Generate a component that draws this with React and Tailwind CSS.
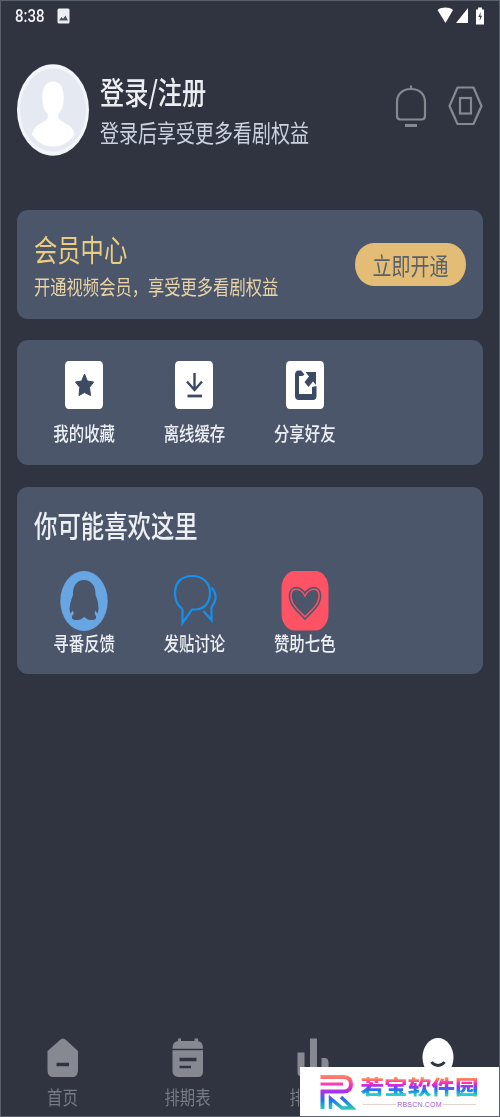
import React from 'react'
import clsx from 'clsx'

// 所有文字纵向拉长
function Tall({ className, children }) {
  return (
    <span className={clsx('block whitespace-nowrap scale-y-[1.27]', className)}>
      {children}
    </span>
  )
}

function StatusBar() {
  return (
    <div className="h-8 flex items-start justify-between pl-3.5 pr-[14px]">
      <div className="flex items-center gap-3 pt-[5px]">
        <span className="block w-[30px] h-5 leading-5 text-[15px] font-medium text-[#f0f1f3] font-['Roboto',sans-serif] scale-y-[1.25]">8:38</span>
        <svg width="13" height="16" viewBox="0 0 13 16">
          <rect x="0.5" y="0.5" width="12" height="15" rx="1.5" fill="#eceef0" />
          <path d="M2 12.5L4.5 9L6 10.8L8.5 7.5L11 12.5Z" fill="#4c5058" />
        </svg>
      </div>
      <svg width="48" height="20" viewBox="0 0 48 20" className="mt-[5px]">
        <path d="M0.5 4C5 0.8 12 0.8 16 4L8.5 17Z" fill="#fff" />
        <path d="M31 2V17H19Z" fill="#fff" />
        <path d="M39 3.5H41V1.5H45V3.5H47V18.5H39Z" fill="#fff" />
        <path d="M43.8 6L41.3 11H43L42.6 15L45 9.8H43.3Z" fill="#3a3f4a" />
      </svg>
    </div>
  )
}

function Avatar() {
  return (
    <svg width="72" height="92" viewBox="0 0 72 92">
      <ellipse cx="36" cy="46" rx="36" ry="45.7" fill="#f2f5f9" />
      <ellipse cx="36" cy="46" rx="33" ry="41.5" fill="#e5e9f1" />
      <path d="M36 17.5C43 17.5 46.8 24 46.8 33C46.8 42 44.5 47 41.5 49.5C41 53 41.2 55 43.5 56.5L52 61.5C55 63.5 57 67 57.5 70.5C53 78 45 82.5 36 82.5C27 82.5 19.5 78 15 70.5C15.5 67 17.5 63.5 20 61.5L28.5 56.5C31 55 31.3 53 30.5 49.5C27.5 47 25.2 42 25.2 33C25.2 24 29 17.5 36 17.5Z" fill="#fff" />
    </svg>
  )
}

function Header() {
  return (
    <div className="flex items-start h-[177px] pt-[31px]">
      <Avatar />
      <div className="ml-[11px] pt-[11px] flex-1">
        <Tall className="text-[24.2px] leading-8 font-medium text-[#eceef1]">登录/注册</Tall>
        <Tall className="text-[19px] leading-8 mt-[9px] text-[#cbd1df]">登录后享受更多看剧权益</Tall>
      </div>
      <svg width="34" height="44" viewBox="0 0 34 44" className="mt-[21px] mr-5" fill="none" stroke="#858990" strokeWidth="2.2">
        <path d="M17 0.5V4M17 4C8 4 3 9.5 3 17V31Q3 34.5 6.5 34.5H27.5Q31 34.5 31 31V17C31 9.5 26 4 17 4Z" />
        <path d="M11 40.5H23" strokeWidth="3" />
      </svg>
      <svg width="35" height="40" viewBox="0 0 35 40" className="mt-[22px]" fill="none" stroke="#858990" strokeWidth="2.2">
        <path d="M9.5 1.5H25.5L33.5 20L25.5 38H9.5L1.5 20Z" strokeLinejoin="round" />
        <rect x="12" y="12" width="11" height="15.5" />
      </svg>
    </div>
  )
}

function VipCard() {
  return (
    <section className="h-[109px] mb-[21px] rounded-[11px] bg-[#4c566a] px-[17px] flex items-center justify-between">
      <div className="pt-[3px]">
        <Tall className="text-[23.3px] leading-8 text-[#e9cd80]">会员中心</Tall>
        <Tall className="text-[16.3px] leading-7 mt-2 text-[#e8d3a6]">开通视频会员，享受更多看剧权益</Tall>
      </div>
      <button className="w-[111px] h-[43px] rounded-[19px/22px] bg-[#e3bd75] flex items-center justify-center">
        <Tall className="text-[19px] leading-7 text-[#59606a]">立即开通</Tall>
      </button>
    </section>
  )
}

function StarIcon() {
  return (
    <path d="M19.5 13L22.3 20L28.5 21L24.5 26.5L25.5 34.5L19.5 31.5L14 34.5L14.8 26.5L10.5 21L16.7 20Z" fill="#3d4a63" stroke="#3d4a63" strokeLinejoin="round" />
  )
}

function DownloadIcon() {
  return (
    <g fill="none" stroke="#3d4a63" strokeWidth="2.4">
      <path d="M19.5 12V29M12 20.5L19.5 29L27 20.5" />
      <path d="M12.5 35H27" strokeWidth="2.8" />
    </g>
  )
}

function ShareIcon() {
  return (
    <g fill="#3d4a63">
      <path d="M9 14Q9 9.5 12.5 9.5H15L18.5 13.5L16.5 15H13V33H26V26L30.5 25V35Q30.5 39 27 39H12Q9 38.5 9 35Z" />
      <path d="M19.5 11H30V24L27 20.5L22.5 26L18.5 21L23 15.5Z" />
    </g>
  )
}

function Tile({ children }) {
  return (
    <svg width="38" height="48" viewBox="0 0 38 48">
      <path d="M4 0H34Q38 0 38 5V43Q38 48 34 48H4Q0 48 0 43V5Q0 0 4 0Z" fill="#fff" />
      {children}
    </svg>
  )
}

function PenguinIcon() {
  return (
    <svg width="48" height="60" viewBox="0 0 48 60">
      <ellipse cx="24" cy="30" rx="23.7" ry="30" fill="#68a5e3" />
      <path d="M24 9C32 9 36 16 35.5 24C38 29 38.5 34 38.5 39L37.5 42.5L35.5 39.5L34.5 42.5L36 45V47.5C34 49.5 29 49.5 26.5 47.5L24 46L22 47.5C19 49.5 14 49.5 12 47.5V45L14 42.5L12.5 39.5L10.5 42.5L9.5 39C9.5 34 11 29 13 24C12.5 16 16 9 24 9Z" fill="#4c566a" />
    </svg>
  )
}

function ChatIcon() {
  return (
    <svg width="48" height="60" viewBox="0 0 48 60" fill="none" stroke="#1590ee" strokeWidth="2.2">
      <path d="M12 37.5C7 34 5 28 5 22C5 11 12 5 22 5C33 5 40 12 40 22C40 32 34 38.5 25 38.5H22L12.5 52V37.5" />
      <path d="M41.5 16.5C44.5 20 46 24 45.5 28C45 32 43 34.5 41.5 36.5V49L33.5 40" />
    </svg>
  )
}

function HeartIcon() {
  const heart = 'M24 25C21.5 19.5 17 17.5 13 18.5C9.5 20 9 26 11.5 31.5C14 37 19.5 41 24 46C28.5 41 34 37 36.5 31.5C39 26 38.5 20 35 18.5C31 17.5 26.5 19.5 24 25Z'
  return (
    <svg width="48" height="60" viewBox="0 0 48 60">
      <rect x="0.5" y="0" width="47" height="59.5" rx="13" ry="17" fill="#fe5265" />
      <path d={heart} fill="#4c566a" stroke="#4c566a" strokeWidth="4.5" />
      <path d={heart} fill="none" stroke="#fe5265" strokeWidth="1.5" />
    </svg>
  )
}

const tools = [
  { label: '我的收藏', icon: <Tile><StarIcon /></Tile> },
  { label: '离线缓存', icon: <Tile><DownloadIcon /></Tile> },
  { label: '分享好友', icon: <Tile><ShareIcon /></Tile> },
]

const likes = [
  { label: '寻番反馈', icon: <PenguinIcon /> },
  { label: '发贴讨论', icon: <ChatIcon /> },
  { label: '赞助七色', icon: <HeartIcon /> },
]

function IconRow({ items, labelClass }) {
  return (
    <div className="flex pl-3">
      {items.map(item => (
        <div key={item.label} className="w-[110.3px] flex flex-col items-center">
          {item.icon}
          <Tall className={clsx('text-[15.4px] leading-5 font-medium text-[#eceff3]', labelClass)}>{item.label}</Tall>
        </div>
      ))}
    </div>
  )
}

const tabs = [
  {
    label: '首页',
    icon: (
      <>
        <path d="M19 2L31 13V33Q30 39 26 39H6Q1 39 0.5 33V13L13 2Q16 -1 19 2Z" fill="#868991" />
        <path d="M9.5 26.5H22" stroke="#2f3440" strokeWidth="3.5" />
      </>
    ),
  },
  {
    label: '排期表',
    icon: (
      <>
        <path d="M6 0.5H9V3H22.5V0.5H26V3Q31 4 31 10V33Q31 39 26 39H6Q0.5 38 0.5 33V10Q0.5 4 6 3Z" fill="#868991" />
        <path d="M0 11.5H32" stroke="#2f3440" strokeWidth="1.5" />
        <path d="M7.5 21.5H24.5" stroke="#2f3440" strokeWidth="3.5" />
        <path d="M7.5 29H19" stroke="#2f3440" strokeWidth="2.5" />
      </>
    ),
  },
  {
    label: '排行榜',
    icon: (
      <>
        <path d="M0.5 14.5H7.5V38.5H4Q0.5 38 0.5 34Z" fill="#868991" />
        <path d="M13 0.5H20V38.5H13Z" fill="#868991" />
        <path d="M24.500 20H29Q31.5 21 31.5 24V38.5H24.5Z" fill="#868991" />
      </>
    ),
  },
  {
    icon: (
      <>
        <ellipse cx="16" cy="19.5" rx="15.5" ry="19.5" fill="#fff" />
        <path d="M9.5 24Q12 27.5 16 27.5Q20 27.5 22.5 24" fill="none" stroke="#2f3440" strokeWidth="3" />
      </>
    ),
  },
]

function TabBar() {
  return (
    <nav className="-mx-[17px] grid grid-cols-4 h-[79px]">
      {tabs.map((tab, i) => (
        <div key={i} className="flex flex-col items-center">
          <svg width="32" height="40" viewBox="0 0 32 40">{tab.icon}</svg>
          {tab.label && (
            <Tall className="text-[15.4px] leading-5 mt-2 text-[#777b85]">{tab.label}</Tall>
          )}
        </div>
      ))}
    </nav>
  )
}

function SiteBadge() {
  return (
    <div className="absolute -right-px -bottom-px w-[200px] h-[50px] bg-white flex items-start pl-5 pt-2">
      <svg width="36" height="35" viewBox="0 0 36 35" fill="none" stroke="url(#brand)">
        <defs>
          <linearGradient id="brand" gradientUnits="userSpaceOnUse" x1="0" y1="0" x2="0" y2="35">
            <stop offset="0" stopColor="#ff9050" />
            <stop offset="0.3" stopColor="#fb2fc0" />
            <stop offset="0.5" stopColor="#9b35ef" />
            <stop offset="0.72" stopColor="#1878ec" />
            <stop offset="1" stopColor="#35d0b0" />
          </linearGradient>
        </defs>
        <path d="M0.5 2H23Q31 2 31 9.3Q31 16.5 23 16.5H2.5V34" strokeWidth="4" />
        <path d="M0.5 9H23" strokeWidth="3" />
        <path d="M10.5 34V23.5L22 33H32.5L21 22" strokeWidth="3.5" />
      </svg>
      <div className="ml-1 w-[119px] flex flex-col items-center">
        <span className="block whitespace-nowrap text-[23.6px] leading-6 h-6 -mt-px font-black bg-[linear-gradient(180deg,#ff9d45_10%,#fb25c4_38%,#8a3df2_54%,#1b7bf0_70%,#2bd5c0_94%)] bg-clip-text text-transparent scale-y-[0.88]">若宝软件园</span>
        <div className="w-[113px] mt-0.5 flex items-center gap-px">
          <span className="flex-1 h-px bg-[#e2d3cf]" />
          <span className="text-[7px] leading-[9px] tracking-[0.2px] text-[#a45cc8] font-['Liberation_Sans',sans-serif]">RBSCN.COM</span>
          <span className="flex-1 h-px bg-[#e2d3cf]" />
        </div>
      </div>
    </div>
  )
}

export default function App() {
  return (
    <div className="relative w-[500px] h-[1117px] overflow-hidden bg-[#2f3440] border border-[#5a606c] font-['Noto_Sans_CJK_SC',sans-serif]">
      <StatusBar />
      <main className="px-4">
        <Header />
        <VipCard />
        <section className="h-[125px] mb-[22px] pt-[21px] rounded-[11px] bg-[#4c566a]">
          <IconRow items={tools} labelClass="mt-[13px]" />
        </section>
        <section className="h-[187px] mb-[364px] pt-[21px] rounded-[11px] bg-[#4c566a]">
          <Tall className="pl-[17px] text-[23.4px] leading-8 font-medium text-[#eceff3]">你可能喜欢这里</Tall>
          <div className="pt-[31px]">
            <IconRow items={likes} labelClass="mt-px" />
          </div>
        </section>
        <TabBar />
      </main>
      <SiteBadge />
    </div>
  )
}
